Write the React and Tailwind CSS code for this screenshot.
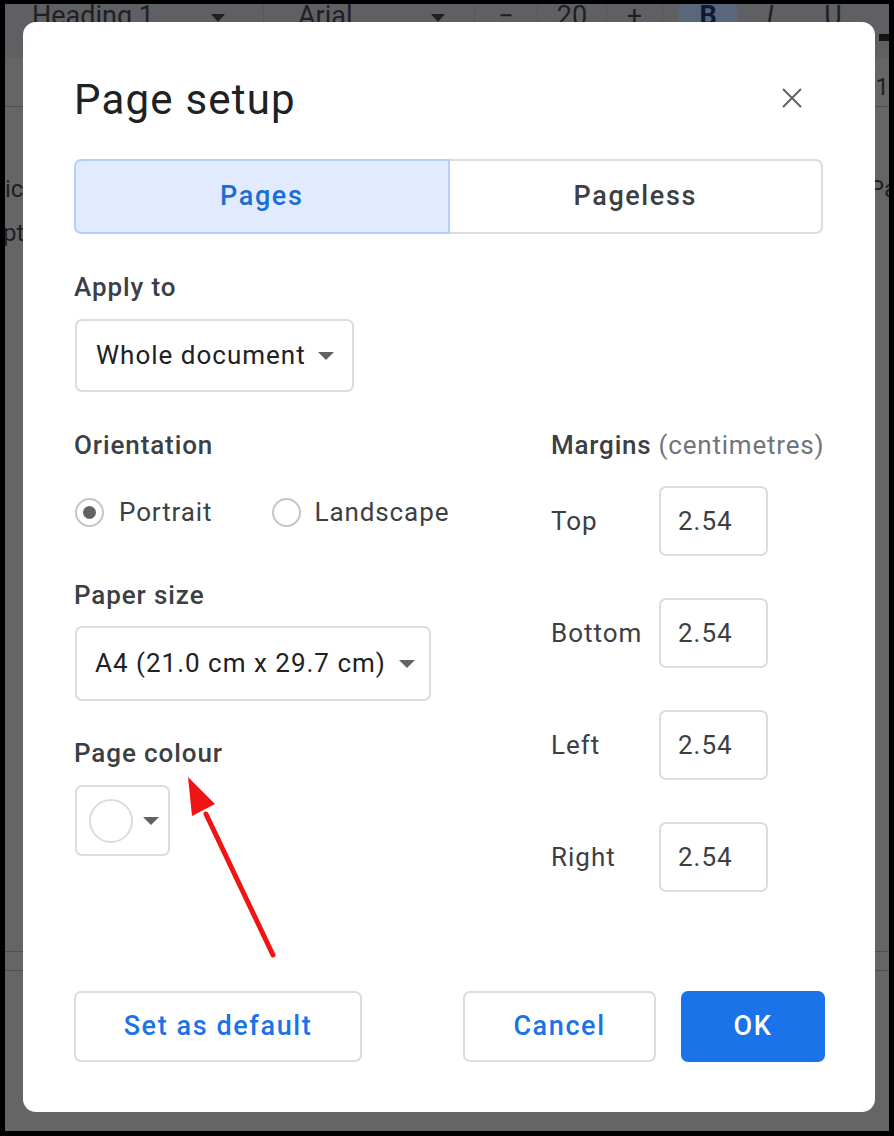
import React from "react";

const font = { fontFamily: "Roboto, 'Liberation Sans', Arial, sans-serif" };

function Caret({ className = "" }) {
  return (
    <svg width="16" height="8" viewBox="0 0 16 8" className={className}>
      <path d="M0 0 L16 0 L8 8 Z" fill="#5f6368" />
    </svg>
  );
}

function MarginRow({ label }) {
  return (
    <div className="flex items-center h-[70px]">
      <div className="w-[108px] text-[26px] tracking-[1px] text-[#3c4043]">{label}</div>
      <div className="w-[109px] h-[70px] border-2 border-[#dadce0] rounded-[7px] flex items-center pl-[17px] text-[26px] tracking-[1px] text-[#3c4043]">
        2.54
      </div>
    </div>
  );
}

export default function App() {
  return (
    <div className="w-[894px] h-[1136px] bg-black pt-[4px] pl-[5px] pr-[5px] pb-[5px] relative" style={font}>
      <div className="w-full h-full bg-[#646564] relative overflow-hidden">
        {/* background toolbar */}
        <div className="h-[54px] bg-[#5f6063] flex items-start text-[27px] text-[#1f2023] leading-none">
          <div className="flex items-center h-[36px] -mt-[6px] pl-[27px] w-[258px] shrink-0">
            <span>Heading 1</span>
            <svg width="14" height="8" viewBox="0 0 14 8" className="ml-[57px] mt-[4px]"><path d="M0 0 L14 0 L7 8 Z" fill="#1f2023" /></svg>
          </div>
          <div className="w-px h-[36px] bg-[#55565a]" />
          <div className="flex items-center h-[36px] -mt-[6px] pl-[34px] w-[210px] shrink-0">
            <span>Arial</span>
            <svg width="14" height="8" viewBox="0 0 14 8" className="ml-[78px] mt-[4px]"><path d="M0 0 L14 0 L7 8 Z" fill="#1f2023" /></svg>
          </div>
          <div className="w-px h-[36px] bg-[#55565a]" />
          <div className="flex items-center justify-center h-[36px] -mt-[6px] w-[62px]">−</div>
          <div className="w-px h-[36px] bg-[#55565a]" />
          <div className="flex items-center justify-center h-[36px] -mt-[6px] w-[68px]">20</div>
          <div className="w-px h-[36px] bg-[#55565a]" />
          <div className="flex items-center justify-center h-[36px] -mt-[6px] w-[55px]">+</div>
          <div className="w-px h-[36px] bg-[#55565a]" />
          <div className="w-[16px]" />
          <div className="flex items-center justify-center h-[36px] -mt-[6px] w-[58px] bg-[#5a6679] font-bold text-[#0c1a33]">B</div>
          <div className="flex items-center justify-center h-[36px] -mt-[6px] w-[66px] italic">I</div>
          <div className="flex items-center justify-center h-[36px] -mt-[6px] w-[60px] underline">U</div>
        </div>
        <div className="h-[48px] flex flex-col items-end">
          <div className="w-[10px] mt-[-24px] h-[7px] bg-[#151515]" />
          <div className="mt-[34px] text-[24px] leading-none text-[#1f1f1f] mr-0">1</div>
        </div>
        <div className="h-px bg-[#4e4f4f]" />
        <div className="flex justify-between text-[24px] text-[#1f1f1f] leading-none mt-[70px]">
          <span className="ml-0">ic</span>
          <span className="-mr-[8px]">Pa</span>
        </div>
        <div className="flex text-[24px] text-[#1f1f1f] leading-none mt-[20px]">
          <span className="-ml-[2px]">pt</span>
        </div>
        <div className="h-px bg-[#4e4f4f] mt-[706px]" />
        <div className="h-px bg-[#4e4f4f] mt-[18px]" />
      </div>

      {/* dialog */}
      <div className="absolute left-[23px] top-[22px] w-[852px] h-[1090px] bg-white rounded-[13px] pt-[54px] pl-[51px] pr-[52px]">
        <div className="flex items-center justify-between h-[48px]">
          <div className="text-[42px] text-[#202124] leading-none tracking-[1.2px]">Page setup</div>
          <svg width="24" height="24" viewBox="0 0 24 24" className="mr-[19px] -mt-[5px]">
            <path d="M3 3 L21 21 M21 3 L3 21" stroke="#5f6368" strokeWidth="2" />
          </svg>
        </div>

        <div className="mt-[35px] flex h-[75px]">
          <div className="flex-1 bg-[#e1ebfd] border-2 border-[#b4cffa] rounded-l-[7px] flex items-center justify-center text-[27px] font-medium tracking-[1.6px] text-[#1a6dd8]">
            Pages
          </div>
          <div className="flex-1 border-2 border-l-0 border-[#dadce0] rounded-r-[7px] flex items-center justify-center text-[27px] font-medium tracking-[1.6px] text-[#3c4043]">
            Pageless
          </div>
        </div>

        <div className="mt-[37px] h-[32px] flex items-center text-[26px] font-medium tracking-[0.9px] text-[#3c4043]">Apply to</div>
        <div className="mt-[16px] w-[279px] h-[73px] ml-px border-2 border-[#dadce0] rounded-[7px] flex items-center pl-[19px] text-[26px] tracking-[1px] text-[#202124]">
          <span>Whole document</span>
          <Caret className="ml-[12px]" />
        </div>

        <div className="mt-[37px] flex">
          <div className="w-[477px] shrink-0">
            <div className="h-[32px] flex items-center text-[26px] font-medium tracking-[0.9px] text-[#3c4043]">Orientation</div>
            <div className="mt-[36px] h-[30px] flex items-center text-[26px] tracking-[0.9px] text-[#3c4043]">
              <div className="w-[29px] h-[29px] ml-px rounded-full border-2 border-[#c4c7c5] flex items-center justify-center">
                <div className="w-[13px] h-[13px] rounded-full bg-[#5f6368]" />
              </div>
              <span className="ml-[15px]">Portrait</span>
              <div className="w-[29px] h-[29px] ml-[59px] rounded-full border-2 border-[#c4c7c5]" />
              <span className="ml-[14px]">Landscape</span>
            </div>
            <div className="mt-[52px] h-[32px] flex items-center text-[26px] font-medium tracking-[0.9px] text-[#3c4043]">Paper size</div>
            <div className="mt-[15px] w-[356px] h-[75px] ml-px border-2 border-[#dadce0] rounded-[7px] flex items-center pl-[18px] text-[26px] tracking-[1px] text-[#202124]">
              <span>A4 (21.0 cm x 29.7 cm)</span>
              <Caret className="ml-[13px]" />
            </div>
            <div className="mt-[36px] h-[32px] flex items-center text-[26px] font-medium tracking-[0.9px] text-[#3c4043]">Page colour</div>
            <div className="mt-[16px] w-[95px] h-[71px] ml-px border-2 border-[#dadce0] rounded-[7px] flex items-center pl-[12px]">
              <div className="w-[44px] h-[44px] rounded-full border-2 border-[#dadce0] bg-white" />
              <Caret className="ml-[10px]" />
            </div>
          </div>

          <div className="flex-1 min-w-0">
            <div className="h-[32px] flex items-center text-[26px] tracking-[0.8px] whitespace-nowrap">
              <span className="font-medium text-[#3c4043]">Margins</span>
              <span className="ml-[7px] text-[#70757a]">(centimetres)</span>
            </div>
            <div className="mt-[25px] flex flex-col gap-[42px]">
              <MarginRow label="Top" />
              <MarginRow label="Bottom" />
              <MarginRow label="Left" />
              <MarginRow label="Right" />
            </div>
          </div>
        </div>

        <div className="mt-[99px] -mr-[2px] flex items-center">
          <div className="w-[288px] h-[71px] border-2 border-[#dadce0] rounded-[7px] flex items-center justify-center text-[27px] font-medium tracking-[1.6px] text-[#1a73e8]">
            Set as default
          </div>
          <div className="flex-1" />
          <div className="w-[193px] h-[71px] border-2 border-[#dadce0] rounded-[7px] flex items-center justify-center text-[27px] font-medium tracking-[1.6px] text-[#1a73e8]">
            Cancel
          </div>
          <div className="ml-[25px] w-[144px] h-[71px] bg-[#1a73e8] rounded-[7px] flex items-center justify-center text-[27px] font-medium tracking-[1.6px] text-white">
            OK
          </div>
        </div>
      </div>

      {/* annotation arrow */}
      <svg className="absolute left-0 top-0 pointer-events-none" width="894" height="1136" viewBox="0 0 894 1136">
        <line x1="273" y1="955" x2="206" y2="814" stroke="#f01414" strokeWidth="5" strokeLinecap="round" />
        <path d="M188 777 L215 804 L192 816 Z" fill="#f01414" />
      </svg>
    </div>
  );
}
